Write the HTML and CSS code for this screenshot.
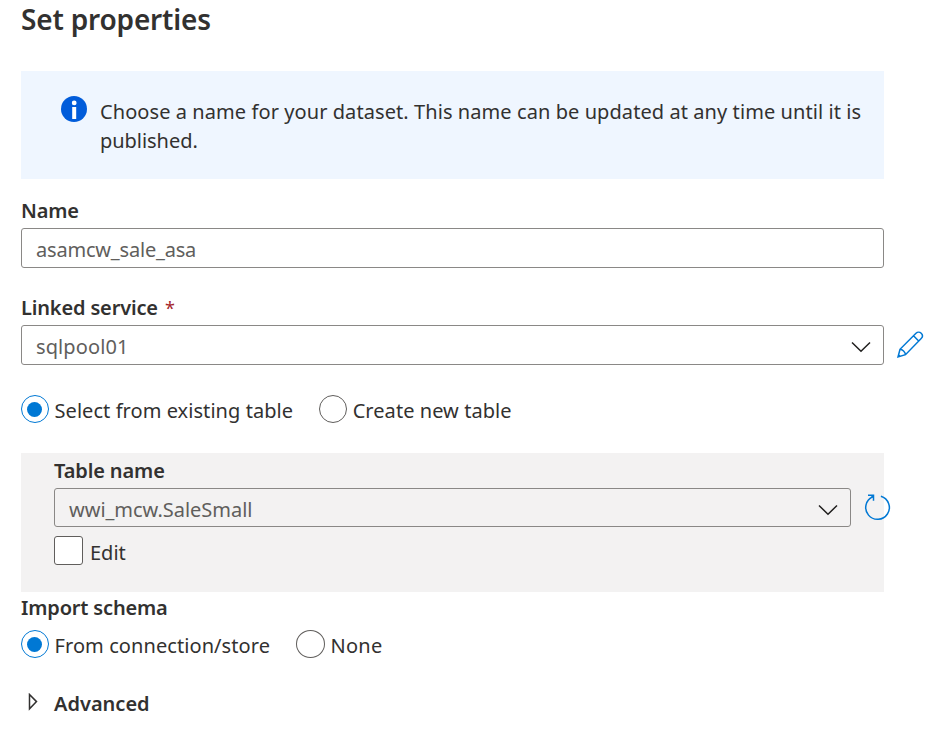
FILE: index.html
```
<!DOCTYPE html>
<html lang="en">
<head>
<meta charset="utf-8">
<title>Set properties</title>
<link rel="stylesheet" href="styles.css">
</head>
<body>
<main class="panel">
  <h1 class="title">Set properties</h1>
  <section class="info">
    <svg class="info-icon" width="26" height="26" viewBox="0 0 26 26"><circle cx="13" cy="13" r="13" fill="#015cda"/><circle cx="13.2" cy="6.9" r="2.4" fill="#fff"/><rect x="11.2" y="11" width="4" height="12" fill="#fff"/></svg>
    <p class="info-text"><span class="line-one">Choose a name for your dataset. This name can be updated at any time until it is</span><br><span class="line-two">published.</span></p>
  </section>

  <div class="label"><span class="t-name">Name</span></div>
  <div class="field"><span class="t-asa">asamcw_sale_asa</span></div>

  <div class="label label-linked"><span class="t-linked">Linked service</span><span class="required">*</span></div>
  <div class="field-row">
    <div class="field"><span class="t-pool">sqlpool01</span>
      <svg class="chevron" width="20" height="12" viewBox="0 0 20 12"><path d="M1 1.500 10 10.200 19 1.500"/></svg>
    </div>
    <svg class="pencil" width="28" height="28" viewBox="0 0 28 28"><path d="M2 26 4 18.300 20 2.300C21.500.800 23.700.800 25.200 2.300S26.700 6 25.200 7.500L9.500 23.700ZM17.500 4.800 22.700 10M4 18.300C6.500 18.500 9.200 21 9.500 23.700M2.200 23.600 4.600 25.500"/></svg>
  </div>

  <div class="radios">
    <span class="radio checked"></span><span class="t-select">Select from existing table</span>
    <span class="radio second"></span><span class="t-create">Create new table</span>
  </div>

  <section class="table-box">
    <div class="label"><span class="t-table">Table name</span></div>
    <div class="field-row">
      <div class="field"><span class="t-wwi">wwi_mcw.SaleSmall</span>
        <svg class="chevron" width="20" height="12" viewBox="0 0 20 12"><path d="M1 1.500 10 10.200 19 1.500"/></svg>
      </div>
      <svg class="refresh" width="27" height="29" viewBox="0 0 27 29"><path d="M16.900 4.200A11.800 11.800 0 1 1 8.800 4.700M4 3.200H9.500V8.800M9.300 3.500 6.200 6.500"/></svg>
    </div>
    <div class="check-row"><span class="checkbox"></span><span class="t-edit">Edit</span></div>
  </section>

  <div class="label label-import"><span class="t-import">Import schema</span></div>
  <div class="radios radios-import">
    <span class="radio checked"></span><span class="t-from">From connection/store</span>
    <span class="radio second"></span><span class="t-none">None</span>
  </div>

  <div class="advanced">
    <svg width="10" height="18" viewBox="0 0 10 18"><path d="M1.500 1.500V15.800L8.500 8.600Z"/></svg>
    <span class="t-advanced">Advanced</span>
  </div>
</main>
</body>
</html>
```
FILE: styles.css
```
* { box-sizing: border-box; }
body { margin: 0; background: #fff; color: #323130; font: 20px/28px "Noto Sans", "Open Sans", sans-serif; }
svg { display: block; flex: none; fill: none; }
span { white-space: nowrap; }
.panel { width: 863px; margin-left: 21px; }
.title { margin: 0; height: 71px; padding-top: 1px; font-size: 28px; line-height: 36px; font-weight: 600; letter-spacing: -.18px; }
.info { display: flex; height: 108px; padding: 25px 0 0 40px; background: #eff6ff; }
.info-text { margin: 1px 0 0 13px; line-height: 29px; }
.line-one { letter-spacing: .076px; }
.line-two { letter-spacing: -.04px; }
.label { height: 28px; margin: 17px 0 4px; padding-top: 1px; font-weight: 600; }
.label-linked { margin-top: 25px; }
.t-name { letter-spacing: -.2px; }
.t-linked, .t-import { letter-spacing: -.16px; }
.t-table { letter-spacing: -.12px; }
.required { margin-left: 7px; color: #a4262c; font-size: 18px; font-weight: 400; line-height: 20px; }
.field { display: flex; flex: none; align-items: center; justify-content: space-between; width: 100%; height: 40px; padding: 3px 12px 0 14px; border: 1px solid #8a8886; border-radius: 3px; color: #605e5c; }
.t-asa { letter-spacing: -.2px; }
.t-pool { letter-spacing: .1px; }
.t-wwi { letter-spacing: -.03px; }
.field-row { display: flex; }
.chevron { stroke: #201f1e; stroke-width: 1.500; }
.pencil { margin: 6px 0 0 12px; stroke: #0078d4; stroke-width: 1.500; }
.radios { display: flex; height: 28px; margin-top: 30px; }
.radios > span:not(.radio) { margin: 2px 0 0 5.500px; }
.t-select, .t-create { letter-spacing: .06px; }
.t-from { letter-spacing: .08px; }
.t-none { letter-spacing: .25px; }
.radio { display: flex; align-items: center; justify-content: center; width: 28px; height: 28px; flex: none; border: 1px solid #605e5c; border-radius: 50%; }
.checked { padding-right: 1px; border-color: #0078d4; }
.checked::after { content: ""; width: 15px; height: 15px; border-radius: 50%; background: #0078d4; }
.second { margin-left: 26px; }
.radios-import .second { width: 29px; }
.table-box { height: 139px; margin-top: 30px; padding: 3px 33px 0; background: #f3f2f2; }
.table-box .label { margin: 0 0 4px; }
.table-box .field { height: 39px; padding-top: 4px; }
.refresh { margin: 4px 0 0 13px; stroke: #0078d4; stroke-width: 1.500; }
.check-row { display: flex; margin-top: 9px; }
.checkbox { width: 29px; height: 29px; margin-right: 7px; border: 1px solid #605e5c; border-radius: 3px; background: #fff; }
.t-edit { margin-top: 3px; }
.label-import { margin: 1px 0 0; }
.radios-import { margin-top: 9px; }
.advanced { display: flex; margin: 31px 0 0 7px; padding-top: 1px; font-weight: 600; }
.advanced svg { margin: 3px 16px 0 0; stroke: #323130; stroke-width: 1.500; }
```
